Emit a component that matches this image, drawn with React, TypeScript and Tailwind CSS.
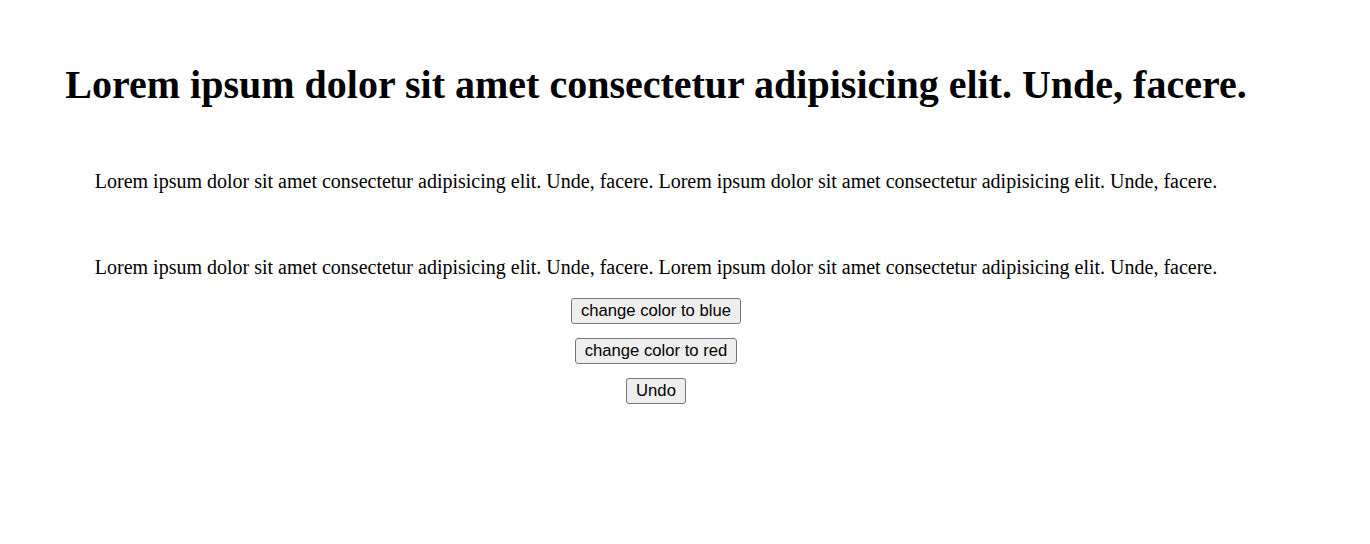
import React from 'react';

const text =
    'Lorem ipsum dolor sit amet consectetur adipisicing elit. Unde, facere. Lorem ipsum dolor sit amet consectetur adipisicing elit. Unde, facere.';

const Btn = ({ label }: { label: string }) => (
    <button className="h-[26px] px-[9px] border border-[#767676] bg-[#efefef] rounded-[3px] text-[16.67px] leading-none text-black font-['Arial','Liberation_Sans',sans-serif]">
        {label}
    </button>
);

export default function App() {
    return (
        <div className="min-h-screen bg-white text-black font-['Times_New_Roman','Liberation_Serif',serif]">
            <div className="w-[1312px] flex flex-col items-center text-center pt-[62px]">
                {/* heading */}
                <h1 className="text-[40px] font-bold leading-[46px]">
                    Lorem ipsum dolor sit amet consectetur adipisicing elit. Unde, facere.
                </h1>

                <p className="text-[20px] leading-[23px] mt-[62px]">{text}</p>
                <p className="text-[20px] leading-[23px] mt-[63px]">{text}</p>

                {/* buttons */}
                <div className="flex flex-col items-center gap-[14px] mt-[19px]">
                    <Btn label="change color to blue" />
                    <Btn label="change color to red" />
                    <Btn label="Undo" />
                </div>
            </div>
        </div>
    );
}
